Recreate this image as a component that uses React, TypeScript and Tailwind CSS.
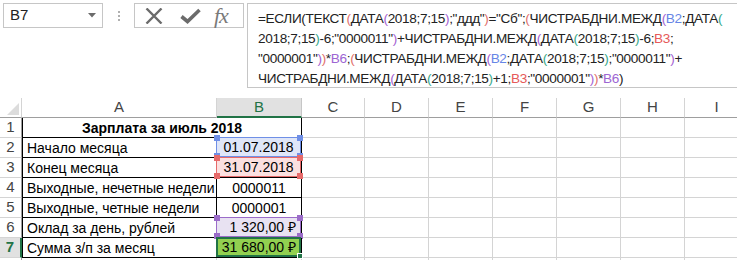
import React from "react";

const P1 = ({ c }: { c: string }) => <span className="text-[#e2706c]">{c}</span>;
const P2 = ({ c }: { c: string }) => <span className="text-[#a45fd2]">{c}</span>;
const P3 = ({ c }: { c: string }) => <span className="text-[#37a98b]">{c}</span>;
const RB2 = () => <span className="text-[#6786e6]">B2</span>;
const RB3 = () => <span className="text-[#e65a5a]">B3</span>;
const RB6 = () => <span className="text-[#9d66d3]">B6</span>;

const EMPTY = ["w-[63px]", "w-[64px]", "w-[64px]", "w-[64px]", "w-[64px]", "w-[64px]", "w-[64px]"];
const HDRS = ["C", "D", "E", "F", "G", "H", "I"];

function Empties() {
  return (
    <>
      {EMPTY.map((w, i) => (
        <div key={i} className={`${w} shrink-0 h-full border-r border-b border-[#d4d4d4]`} />
      ))}
    </>
  );
}

function RowHead({ n, active }: { n: number; active?: boolean }) {
  return active ? (
    <div className="w-[22px] shrink-0 h-full flex items-center justify-center bg-[#e1e1e1] text-[#217346] font-bold text-[15px] border-r-2 border-r-[#217346] border-b border-b-[#d4d4d4]">
      {n}
    </div>
  ) : (
    <div className="w-[22px] shrink-0 h-full flex items-center justify-center text-[#444] text-[15px] border-r border-r-[#9e9e9e] border-b border-b-[#d4d4d4]">
      {n}
    </div>
  );
}

function Corners({ color }: { color: string }) {
  return (
    <>
      <div className={`absolute -left-[3px] -top-[3px] w-[6px] h-[6px] ${color}`} />
      <div className={`absolute -right-[3px] -top-[3px] w-[6px] h-[6px] ${color}`} />
      <div className={`absolute -left-[3px] -bottom-[3px] w-[6px] h-[6px] ${color}`} />
      <div className={`absolute -right-[3px] -bottom-[3px] w-[6px] h-[6px] ${color}`} />
    </>
  );
}

function ACell({ children }: { children: React.ReactNode }) {
  return (
    <div className="w-[195px] shrink-0 h-full flex items-center pl-[4px] pt-[1px] border-l border-l-black border-r border-r-black border-b border-b-black whitespace-nowrap text-black">
      {children}
    </div>
  );
}

export default function App() {
  return (
    <div className="w-[737px] h-[260px] overflow-hidden bg-white relative font-['Liberation_Sans',Arial,sans-serif] text-[14px] text-black">
      {/* formula bar area */}
      <div className="h-[98px] flex items-start pt-[3px]">
        <div className="ml-[3px] shrink-0 w-[100px] h-[25px] border border-[#c6c6c6] flex items-center justify-between pl-[6px] pr-[6px] text-[15px] text-[#222]">
          <span>B7</span>
          <svg width="8" height="5" viewBox="0 0 8 5">
            <path d="M0 0 H8 L4 4.5 Z" fill="#6b6b6b" />
          </svg>
        </div>
        <div className="w-[31px] shrink-0 h-[25px] flex flex-col items-center justify-center gap-[2px]">
          <div className="w-[2px] h-[2px] bg-[#b0b0b0]" />
          <div className="w-[2px] h-[2px] bg-[#b0b0b0]" />
          <div className="w-[2px] h-[2px] bg-[#b0b0b0]" />
        </div>
        <div className="w-[110px] shrink-0 h-[25px] border border-[#c6c6c6] flex items-center pl-[10px]">
          <svg width="18" height="16" viewBox="0 0 18 16" className="shrink-0">
            <path d="M1.5 0.5 L16.5 15.5 M16.5 0.5 L1.5 15.5" stroke="#6b6b6b" strokeWidth="2.4" />
          </svg>
          <svg width="21" height="16" viewBox="0 0 21 16" className="ml-[17px] shrink-0">
            <path d="M1.5 8.5 L7.5 13.5 L19.5 2" stroke="#6b6b6b" strokeWidth="3.6" fill="none" strokeLinejoin="miter" />
          </svg>
          <span className="ml-[13px] font-['Liberation_Serif',serif] italic text-[22px] leading-none text-[#7a7a7a] tracking-[-1px]">
            fx
          </span>
        </div>
        <div className="ml-[3px] flex-1 min-w-0 h-[85px] border border-[#c6c6c6] border-r-0 pl-[10px] pt-[5px] text-[13.6px] leading-[20px] tracking-[-0.35px] whitespace-nowrap overflow-hidden text-[#222]">
          <div>
            =ЕСЛИ(ТЕКСТ<P1 c="(" />ДАТА<P2 c="(" />2018;7;15<P2 c=")" />;"ддд"<P1 c=")" />="Сб";<P1 c="(" />ЧИСТРАБДНИ.МЕЖД<P2 c="(" />
            <RB2 />;ДАТА<P3 c="(" />
          </div>
          <div>
            2018;7;15<P3 c=")" />-6;"0000011"<P2 c=")" />+ЧИСТРАБДНИ.МЕЖД<P2 c="(" />ДАТА<P3 c="(" />2018;7;15<P3 c=")" />-6;
            <RB3 />;
          </div>
          <div>
            "0000001"<P2 c=")" /><P1 c=")" />*<RB6 />;<P1 c="(" />ЧИСТРАБДНИ.МЕЖД<P2 c="(" /><RB2 />;ДАТА<P3 c="(" />2018;7;15
            <P3 c=")" />;"0000011"<P2 c=")" />+
          </div>
          <div>
            ЧИСТРАБДНИ.МЕЖД<P2 c="(" />ДАТА<P3 c="(" />2018;7;15<P3 c=")" />+1;<RB3 />;"0000001"<P2 c=")" /><P1 c=")" />*
            <RB6 />)
          </div>
        </div>
      </div>

      {/* column headers */}
      <div className="flex h-[20px] text-[#444] text-[15px]">
        <div className="w-[22px] shrink-0 h-full relative border-r border-r-[#d4d4d4] border-b border-b-[#9e9e9e]">
          <svg className="absolute right-[2px] bottom-[2px]" width="12" height="12" viewBox="0 0 12 12">
            <path d="M12 0 V12 H0 Z" fill="#dcdcdc" />
          </svg>
        </div>
        <div className="w-[195px] shrink-0 h-full flex items-center justify-center border-r border-r-[#d4d4d4] border-b border-b-[#9e9e9e]">A</div>
        <div className="w-[85px] shrink-0 h-full flex items-center justify-center bg-[#e1e1e1] text-[#217346] border-r border-r-[#c6c6c6] border-b-2 border-b-[#217346]">B</div>
        {HDRS.map((h, i) => (
          <div key={h} className={`${EMPTY[i]} shrink-0 h-full flex items-center justify-center border-r border-r-[#d4d4d4] border-b border-b-[#9e9e9e]`}>
            {h}
          </div>
        ))}
      </div>

      {/* row 1 */}
      <div className="flex h-[20px]">
        <RowHead n={1} />
        <div className="w-[280px] shrink-0 h-full flex items-center justify-center pt-[1px] font-bold border-l border-l-black border-r border-r-black border-b border-b-black">
          Зарплата за июль 2018
        </div>
        <Empties />
      </div>

      {/* row 2 */}
      <div className="flex h-[20px]">
        <RowHead n={2} />
        <ACell>Начало месяца</ACell>
        <div className="w-[85px] shrink-0 h-full relative border-r border-r-black border-b border-b-black">
          <div className="absolute -left-[1px] -top-[1px] right-0 bottom-0 bg-[#dfe6f8] border border-[#6f8fe6] flex items-center justify-center pt-[1px]">
            01.07.2018
            <Corners color="bg-[#6f8fe6]" />
          </div>
        </div>
        <Empties />
      </div>

      {/* row 3 */}
      <div className="flex h-[20px]">
        <RowHead n={3} />
        <ACell>Конец месяца</ACell>
        <div className="w-[85px] shrink-0 h-full relative border-r border-r-black border-b border-b-black">
          <div className="absolute -left-[1px] -top-[1px] right-0 bottom-0 bg-[#fbe0e0] border border-[#e66a6a] flex items-center justify-center pt-[1px]">
            31.07.2018
            <Corners color="bg-[#e66a6a]" />
          </div>
        </div>
        <Empties />
      </div>

      {/* row 4 */}
      <div className="flex h-[20px]">
        <RowHead n={4} />
        <ACell>Выходные, нечетные недели</ACell>
        <div className="w-[85px] shrink-0 h-full flex items-center justify-center pt-[1px] border-r border-r-black border-b border-b-black">0000011</div>
        <Empties />
      </div>

      {/* row 5 */}
      <div className="flex h-[20px]">
        <RowHead n={5} />
        <ACell>Выходные, четные недели</ACell>
        <div className="w-[85px] shrink-0 h-full flex items-center justify-center pt-[1px] border-r border-r-black border-b border-b-black">0000001</div>
        <Empties />
      </div>

      {/* row 6 */}
      <div className="flex h-[20px]">
        <RowHead n={6} />
        <ACell>Оклад за день, рублей</ACell>
        <div className="w-[85px] shrink-0 h-full relative border-r border-r-black border-b border-b-black">
          <div className="absolute -left-[1px] -top-[1px] right-0 bottom-0 bg-[#e8e2f2] border border-[#9b6cc9] flex items-center justify-end pr-[4px] pt-[1px]">
            1 320,00 ₽
            <Corners color="bg-[#9b6cc9]" />
          </div>
        </div>
        <Empties />
      </div>

      {/* row 7 */}
      <div className="flex h-[20px]">
        <RowHead n={7} active />
        <ACell>Сумма з/п за месяц</ACell>
        <div className="w-[85px] shrink-0 h-full relative border-r border-r-black border-b border-b-black">
          <div className="absolute -left-[1px] -top-[1px] right-0 bottom-0 bg-[#92d050] border-2 border-[#217346] flex items-center justify-end pr-[3px] pt-[1px]">
            31 680,00 ₽
            <div className="absolute -right-[4px] -bottom-[4px] w-[6px] h-[6px] bg-[#217346] border border-white" />
          </div>
        </div>
        <Empties />
      </div>

      {/* row 8 partial */}
      <div className="flex h-[20px]">
        <div className="w-[22px] shrink-0 h-full border-r border-r-[#9e9e9e]" />
        <div className="w-[195px] shrink-0 h-full border-r border-[#d4d4d4]" />
        <div className="w-[85px] shrink-0 h-full border-r border-[#d4d4d4]" />
        {EMPTY.map((w, i) => (
          <div key={i} className={`${w} shrink-0 h-full border-r border-[#d4d4d4]`} />
        ))}
      </div>
    </div>
  );
}
